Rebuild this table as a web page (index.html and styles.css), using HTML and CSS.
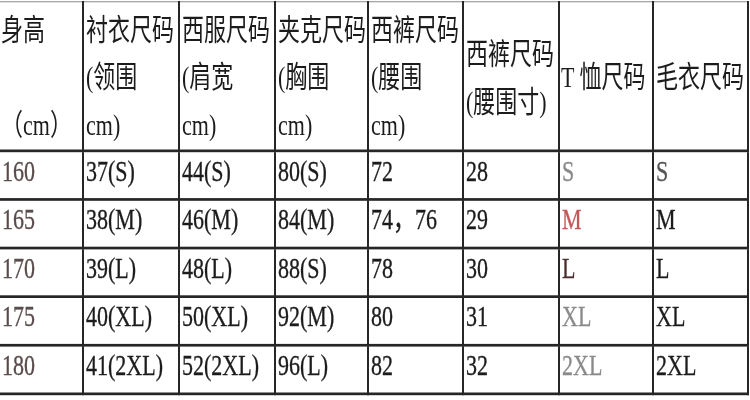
FILE: index.html
```html
<!DOCTYPE html>
<html lang="zh-CN">
<head>
<meta charset="utf-8">
<title>尺码对照表</title>
<link rel="stylesheet" href="styles.css">
</head>
<body>
<div class="sheet">
<table class="sizes">
<thead>
<tr>
<th class="c1">身高<br><br>（cm）</th>
<th class="c2">衬衣尺码<br>(领围<br>cm)</th>
<th class="c3">西服尺码<br>(肩宽<br>cm)</th>
<th class="c4">夹克尺码<br>(胸围<br>cm)</th>
<th class="c5">西裤尺码<br>(腰围<br>cm)</th>
<th class="c6">西裤尺码<br>(腰围寸)</th>
<th class="c7">T 恤尺码</th>
<th class="c8">毛衣尺码</th>
</tr>
</thead>
<tbody>
<tr><td class="h">160</td><td>37(S)</td><td>44(S)</td><td>80(S)</td><td>72</td><td>28</td><td class="t light">S</td><td class="w">S</td></tr>
<tr><td class="h">165</td><td>38(M)</td><td>46(M)</td><td>84(M)</td><td>74，76</td><td>29</td><td class="t red">M</td><td>M</td></tr>
<tr><td class="h">170</td><td>39(L)</td><td>48(L)</td><td>88(S)</td><td>78</td><td>30</td><td class="t dark">L</td><td>L</td></tr>
<tr><td class="h">175</td><td>40(XL)</td><td>50(XL)</td><td>92(M)</td><td>80</td><td>31</td><td class="t light">XL</td><td>XL</td></tr>
<tr><td class="h">180</td><td>41(2XL)</td><td>52(2XL)</td><td>96(L)</td><td>82</td><td>32</td><td class="t light">2XL</td><td>2XL</td></tr>
</tbody>
</table>
</div>
</body>
</html>
```

FILE: styles.css
```css
html, body {
  margin: 0;
  padding: 0;
  background: #fff;
}

body {
  width: 750px;
  height: 400px;
  overflow: hidden;
}

.sheet {
  transform: scaleY(1.35);
  transform-origin: 0 0;
  filter: blur(0.35px);
}

.sizes {
  border-collapse: collapse;
  table-layout: fixed;
  width: 748px;
  margin-top: 1px;
  font-family: "Liberation Serif", "Noto Sans CJK SC", serif;
  font-size: 22px;
  color: #1c1c1c;
}

.sizes th,
.sizes td {
  box-sizing: border-box;
  border: 2px solid #262626;
  padding: 0 0 0 2px;
  text-align: left;
  font-weight: normal;
  white-space: nowrap;
  overflow: hidden;
}

.sizes th:first-child,
.sizes td:first-child {
  border-left: none;
}

.sizes th {
  border-top: 1px solid #a8a8a8;
  height: 110px;
  line-height: 35px;
  vertical-align: middle;
  padding-top: 3px;
}

.sizes td {
  height: 36px;
  line-height: 26px;
  vertical-align: top;
  padding-top: 1px;
  -webkit-text-stroke: 0.25px currentColor;
}

.c1 { width: 83px; }
.c2 { width: 96px; }
.c3 { width: 96px; }
.c4 { width: 93px; }
.c5 { width: 95px; }
.c6 { width: 96px; }
.c7 { width: 94px; }
.c8 { width: 95px; }

.sizes th.c1,
.sizes th.c7 { padding-left: 1px; }

.sizes td.h {
  color: #5a4c4c;
  padding-left: 2px;
}

.sizes td.t.light { color: #8a8a8a; }
.sizes td.t.red { color: #c4585a; }
.sizes td.t.dark { color: #4a2e2e; }
.sizes td.w { color: #555; }
```
